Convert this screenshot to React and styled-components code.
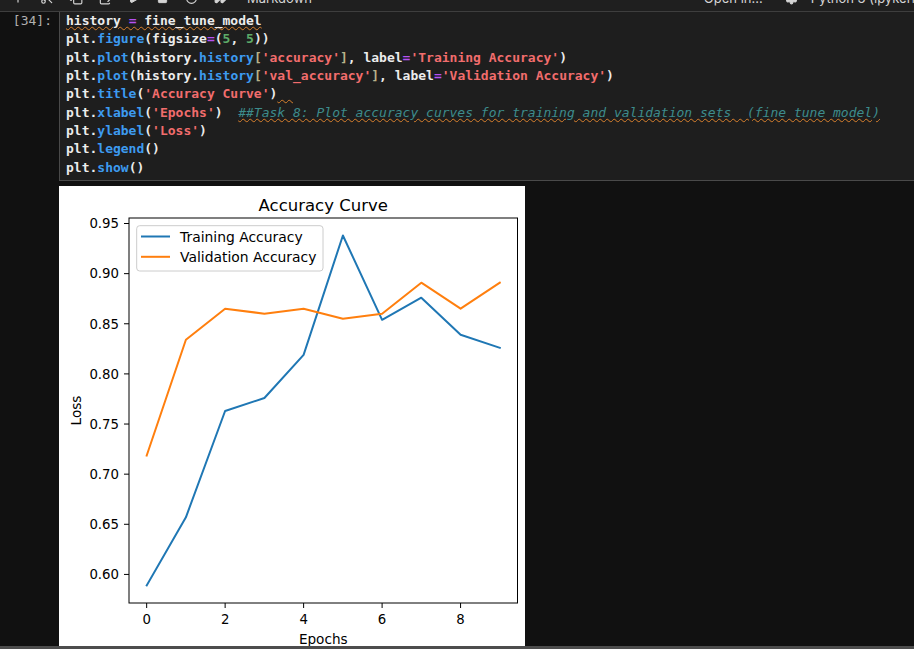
import styled, { createGlobalStyle } from 'styled-components';
import {
  Plus, Scissors, Copy, ClipboardPaste, Play, Square, RotateCw, FastForward, ChevronDown, Settings,
} from 'lucide-react';

const GlobalStyle = createGlobalStyle`
  html, body {
    margin: 0;
    padding: 0;
    background: #111111;
  }
`;

const Page = styled.div`
  width: 914px;
  height: 649px;
  display: flex;
  flex-direction: column;
  overflow: hidden;
  background: #111111;
`;

const Toolbar = styled.div`
  height: 11px;
  flex-shrink: 0;
  overflow: hidden;
  background: #1f1f1f;
  border-bottom: 1px solid #3e3e3e;
`;

const ToolRow = styled.div`
  display: flex;
  align-items: center;
  height: 24px;
  margin-top: -14px;
  padding-left: 3px;
  color: #d4d4d4;
  font-family: Inter, "Noto Sans", sans-serif;
  font-size: 13px;
  white-space: nowrap;
`;

const ToolButton = styled.div`
  width: 29px;
  display: flex;
  justify-content: center;
  flex-shrink: 0;
`;

const ToolLabel = styled.span`
  margin-left: ${(p) => p.$gap || 0}px;
  flex-shrink: 0;
`;

const ToolIcon = styled.span`
  display: flex;
  margin-left: ${(p) => p.$gap || 0}px;
  flex-shrink: 0;
`;

const Main = styled.div`
  flex: 1;
  overflow: hidden;
`;

const Cell = styled.div`
  display: grid;
  grid-template-columns: 59px 1fr;
`;

const Prompt = styled.div`
  text-align: right;
  padding-right: 7px;
  font-family: "DejaVu Sans Mono", monospace;
  font-size: 13px;
  line-height: 18.33px;
  color: #b0b0b0;
`;

const Editor = styled.pre`
  margin: 0;
  padding: 0 0 3px 6px;
  background: #1e1e1e;
  border-left: 1px solid #4a4a4a;
  border-bottom: 1px solid #4a4a4a;
  font-family: "DejaVu Sans Mono", monospace;
  font-size: 13px;
  font-weight: bold;
  line-height: 18.33px;
  color: #ececec;
`;

const colors = {
  plain: '#ececec',
  op: '#b651f2',
  fn: '#3d9bf0',
  num: '#5daa68',
  str: '#f26d6d',
  brk: '#b8b28a',
  cmt: '#3d8c8c',
};

const Tok = styled.span`
  color: ${(p) => colors[p.$k]};
  font-style: ${(p) => (p.$k === 'cmt' ? 'italic' : 'normal')};
  font-weight: ${(p) => (p.$k === 'cmt' ? 'normal' : 'bold')};
  text-decoration: ${(p) => (p.$warn ? 'underline wavy #d8802c' : 'none')};
  text-decoration-thickness: 1px;
  text-underline-offset: 1px;
`;

const Output = styled.div`
  margin-top: 5px;
  padding-left: 59px;
`;

const Figure = styled.div`
  width: 466px;
  height: 466px;
  background: #ffffff;
`;

const BottomBar = styled.div`
  height: 3px;
  flex-shrink: 0;
  background: #4d4d4d;
`;

const train = [0.589, 0.657, 0.763, 0.776, 0.819, 0.938, 0.854, 0.876, 0.839, 0.826];
const val = [0.7185, 0.834, 0.865, 0.860, 0.865, 0.855, 0.860, 0.891, 0.865, 0.891];

const AX = { left: 70, right: 458.5, top: 32, bottom: 417 };
const xs = (e) => AX.left + (e + 0.45) * 39.24;
const ys = (v) => AX.top + (0.9555 - v) * 1002.6;
const pts = (arr) => arr.map((v, i) => `${xs(i).toFixed(1)},${ys(v).toFixed(1)}`).join(' ');

const yTicks = [0.95, 0.9, 0.85, 0.8, 0.75, 0.7, 0.65, 0.6];
const xTicks = [0, 2, 4, 6, 8];

const Chart = () => (
  <svg width="466" height="466" viewBox="0 0 466 466" fontFamily="'DejaVu Sans', sans-serif">
    <text x="264.25" y="24.5" fontSize="16.5" textAnchor="middle" fill="#000">Accuracy Curve</text>
    <rect x={AX.left} y={AX.top} width={AX.right - AX.left} height={AX.bottom - AX.top} fill="#fff" stroke="#000" strokeWidth="1" />
    {yTicks.map((t) => (
      <g key={t}>
        <line x1={AX.left - 5} x2={AX.left} y1={ys(t)} y2={ys(t)} stroke="#000" strokeWidth="1" />
        <text x="60" y={ys(t) + 4.8} fontSize="13.3" textAnchor="end" fill="#000">{t.toFixed(2)}</text>
      </g>
    ))}
    {xTicks.map((t) => (
      <g key={t}>
        <line x1={xs(t)} x2={xs(t)} y1={AX.bottom} y2={AX.bottom + 5} stroke="#000" strokeWidth="1" />
        <text x={xs(t)} y="438" fontSize="13.3" textAnchor="middle" fill="#000">{t}</text>
      </g>
    ))}
    <text x="264.25" y="457.5" fontSize="13.6" textAnchor="middle" fill="#000">Epochs</text>
    <text x="22" y="224.5" fontSize="13.6" textAnchor="middle" fill="#000" transform="rotate(-90 22 224.5)">Loss</text>
    <polyline points={pts(train)} fill="none" stroke="#1f77b4" strokeWidth="2" strokeLinejoin="round" strokeLinecap="square" />
    <polyline points={pts(val)} fill="none" stroke="#ff7f0e" strokeWidth="2" strokeLinejoin="round" strokeLinecap="square" />
    <rect x="77.7" y="39.7" width="186.3" height="45.3" rx="3" fill="#fff" fillOpacity="0.8" stroke="#cccccc" strokeWidth="1" />
    <line x1="82" x2="111" y1="50.5" y2="50.5" stroke="#1f77b4" strokeWidth="2" />
    <text x="121" y="55.8" fontSize="13.9" fill="#000">Training Accuracy</text>
    <line x1="82" x2="111" y1="70.8" y2="70.8" stroke="#ff7f0e" strokeWidth="2" />
    <text x="121" y="76.2" fontSize="13.9" fill="#000">Validation Accuracy</text>
  </svg>
);

const App = () => (
  <>
    <GlobalStyle />
    <Page>
      <Toolbar>
        <ToolRow>
          <ToolButton><Plus size={14} /></ToolButton>
          <ToolButton><Scissors size={14} /></ToolButton>
          <ToolButton><Copy size={14} /></ToolButton>
          <ToolButton><ClipboardPaste size={14} /></ToolButton>
          <ToolButton><Play size={12} fill="#d4d4d4" /></ToolButton>
          <ToolButton><Square size={11} fill="#d4d4d4" /></ToolButton>
          <ToolButton><RotateCw size={13} /></ToolButton>
          <ToolButton><FastForward size={14} fill="#d4d4d4" /></ToolButton>
          <ToolLabel $gap={12}>Markdown</ToolLabel>
          <ToolIcon $gap={10}><ChevronDown size={12} /></ToolIcon>
          <ToolIcon $gap={358}><ChevronDown size={10} /></ToolIcon>
          <ToolLabel $gap={2}>Open in...</ToolLabel>
          <ToolIcon $gap={22}><Settings size={13} fill="#d4d4d4" /></ToolIcon>
          <ToolLabel $gap={13}>Python 3 (ipykernel)</ToolLabel>
        </ToolRow>
      </Toolbar>
      <Main>
        <Cell>
          <Prompt>[34]:</Prompt>
          <Editor>
            <Tok $k="plain" $warn>history <Tok $k="op">=</Tok> fine_tune_model</Tok>{'\n'}
            plt.<Tok $k="fn">figure</Tok>(figsize<Tok $k="op">=</Tok>(<Tok $k="num">5</Tok>, <Tok $k="num">5</Tok>)){'\n'}
            plt.<Tok $k="fn">plot</Tok>(history.<Tok $k="fn">history</Tok><Tok $k="brk">[</Tok><Tok $k="str">'accuracy'</Tok><Tok $k="brk">]</Tok>, label<Tok $k="op">=</Tok><Tok $k="str">'Training Accuracy'</Tok>){'\n'}
            plt.<Tok $k="fn">plot</Tok>(history.<Tok $k="fn">history</Tok><Tok $k="brk">[</Tok><Tok $k="str">'val_accuracy'</Tok><Tok $k="brk">]</Tok>, label<Tok $k="op">=</Tok><Tok $k="str">'Validation Accuracy'</Tok>){'\n'}
            plt.<Tok $k="fn">title</Tok>(<Tok $k="str">'Accuracy Curve'</Tok>)<Tok $k="plain" $warn>{'  '}</Tok>{'\n'}
            plt.<Tok $k="fn">xlabel</Tok>(<Tok $k="str">'Epochs'</Tok>)  <Tok $k="cmt" $warn>##Task 8: Plot accuracy curves for training and validation sets  (fine tune model)</Tok>{'\n'}
            plt.<Tok $k="fn">ylabel</Tok>(<Tok $k="str">'Loss'</Tok>){'\n'}
            plt.<Tok $k="fn">legend</Tok>(){'\n'}
            plt.<Tok $k="fn">show</Tok>()
          </Editor>
        </Cell>
        <Output>
          <Figure>
            <Chart />
          </Figure>
        </Output>
      </Main>
      <BottomBar />
    </Page>
  </>
);

export default App;
